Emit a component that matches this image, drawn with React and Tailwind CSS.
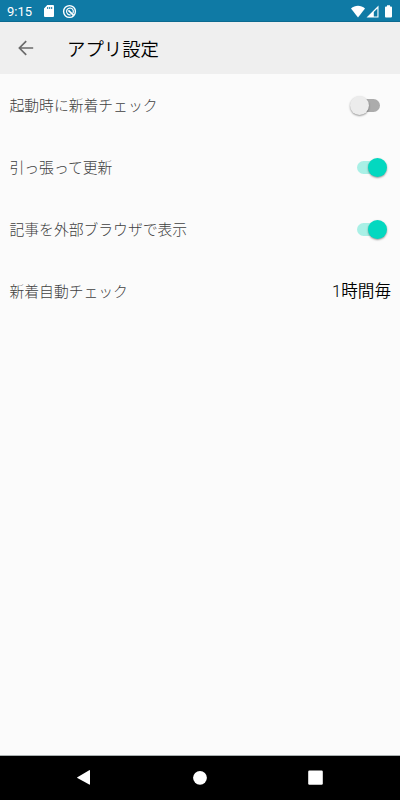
const switches = [
  { label: '起動時に新着チェック', on: false },
  { label: '引っ張って更新', on: true },
  { label: '記事を外部ブラウザで表示', on: true },
]

function StatusBar() {
  return (
    <div className="flex h-[22px] shrink-0 items-center bg-[#0f7aa5] pr-[7px] pl-[7px] text-white shadow-[inset_0_-1px_0_#0c6a90]">
      <span className="w-[37px] font-['Roboto',sans-serif] text-[13px] leading-none">9:15</span>
      <svg className="h-3 w-2.5" viewBox="0 0 10 12" fill="currentColor">
        <path
          fillRule="evenodd"
          d="M3.3 0H9a1 1 0 0 1 1 1v10a1 1 0 0 1-1 1H1a1 1 0 0 1-1-1V3.4zM3.2 2v2h1V2zM5.2 2v2h1V2zM7.2 2v2h1V2z"
        />
      </svg>
      <svg className="ml-2 h-[15px] w-[15px]" viewBox="0 0 15 15" fill="none" stroke="currentColor">
        <circle cx="7.5" cy="7.5" r="5.9" strokeWidth="1.4" />
        <path d="M10.6 9.6A3.4 3.4 0 1 0 8.6 10.8" strokeWidth="1.2" />
        <path d="M6.4 6.4l5.2 5" strokeWidth="1.8" />
      </svg>
      <svg className="ml-auto h-[13px] w-[42px]" viewBox="0 0 42 13" fill="currentColor">
        <path d="M7 12.4L0 3.4C4-.1 10-.1 14 3.4z" />
        <path fillRule="evenodd" d="M27.5 .5v12h-12zM26.4 3.4l-3.6 3.6v4.4h3.6z" />
        <path d="M36 .3h3v1.2h1.1c.5 0 .9.4.9.9v9.2c0 .5-.4.9-.9.9h-5.2a.9.9 0 0 1-.9-.9V2.4c0-.5.4-.9.9-.9H36z" />
      </svg>
    </div>
  )
}

function Header() {
  return (
    <header className="flex h-[52px] shrink-0 items-center bg-[#efefef] pl-[18px]">
      <svg className="h-4 w-4" viewBox="0 0 16 16" fill="none" stroke="#6b6b6b" strokeWidth="1.7">
        <path d="M15.2 8H1.8M8.2 1.2L1.4 8l6.8 6.8" />
      </svg>
      <h1 className="ml-[33px] font-['Noto_Sans_CJK_JP_DemiLight','Noto_Sans_CJK_JP',sans-serif] text-[18.4px] leading-none font-light text-black">
        アプリ設定
      </h1>
    </header>
  )
}

function Switch({ on }) {
  return (
    <div className={`flex h-[19px] w-[37px] items-center ${on ? 'justify-end' : 'justify-start'}`}>
      <div className="relative flex h-[19px] w-[19px] items-center">
        <span
          className={`absolute top-[3px] h-[13px] w-[23px] rounded-full ${on ? 'right-[7px] bg-[#a9f0e6]' : 'left-[7px] bg-[#acacac]'}`}
        />
        <span
          className={`relative h-[19px] w-[19px] rounded-full shadow-[0_1px_2px_rgba(0,0,0,0.4)] ${on ? 'bg-[#03d8c0]' : 'bg-[#ececec]'}`}
        />
      </div>
    </div>
  )
}

function Row({ label, children }) {
  return (
    <div className="flex h-[62px] items-center justify-between pl-[9.5px]">
      <span className="text-[14.8px] leading-none font-light text-[#404040]">{label}</span>
      {children}
    </div>
  )
}

function NavBar() {
  return (
    <nav className="h-[45px] shrink-0 border-t border-[#a9b0b0] bg-black">
      <svg className="h-11 w-full" viewBox="0 0 400 44" fill="#fff">
        <path d="M77.4 21.2L89.2 14.2c.4-.2.8 0 .8.4v13.6c0 .4-.4.6-.8.4L77.4 22c-.5-.3-.5-.5 0-.8z" />
        <circle cx="200" cy="21.8" r="6.9" />
        <rect x="308.2" y="14.6" width="14.6" height="14.2" rx="1.2" />
      </svg>
    </nav>
  )
}

export default function App() {
  return (
    <div
      lang="ja"
      className="flex h-screen w-full flex-col bg-[#fbfbfb] font-['Noto_Sans_CJK_JP',sans-serif]"
    >
      <StatusBar />
      <Header />
      <main className="min-h-0 flex-1">
        {switches.map(({ label, on }) => (
          <Row key={label} label={label}>
            <div className="mr-[13px]">
              <Switch on={on} />
            </div>
          </Row>
        ))}
        <Row label="新着自動チェック">
          <span className="mr-[9px] font-['Noto_Sans_CJK_JP_DemiLight','Noto_Sans_CJK_JP',sans-serif] text-[16.6px] leading-none font-light text-black">
            <span className="font-['Roboto',sans-serif] font-light">1</span>時間毎
          </span>
        </Row>
      </main>
      <NavBar />
    </div>
  )
}
